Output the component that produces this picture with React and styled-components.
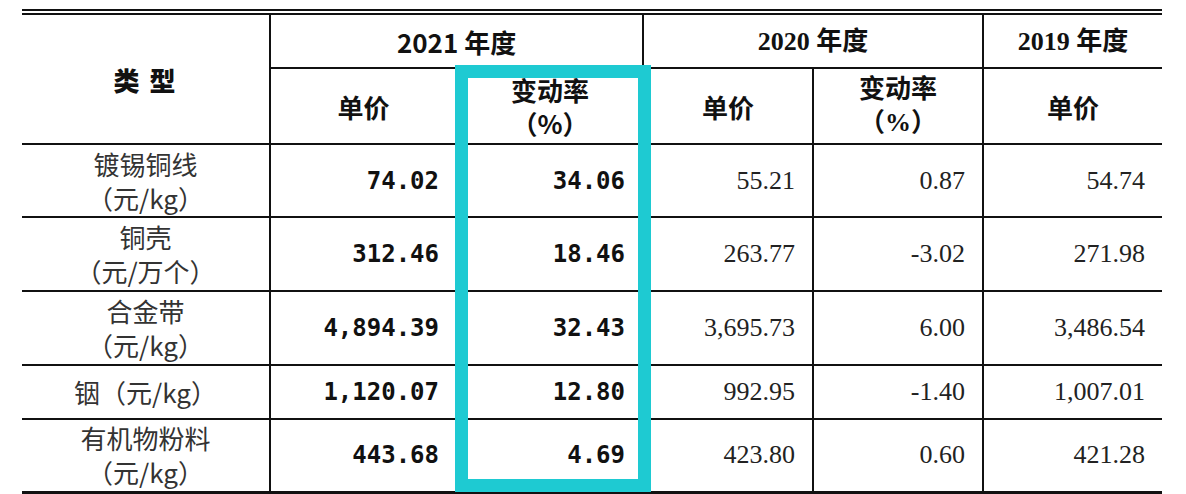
import React from "react";
import styled, { createGlobalStyle } from "styled-components";

const Global = createGlobalStyle`
  html, body { margin: 0; padding: 0; background: #ffffff; }
  body { font-family: "Noto Sans CJK SC", "Noto Sans", sans-serif; }
`;

const Page = styled.div`
  padding: 9px 0 0 22px;
  width: 1140px;
`;

const Frame = styled.div`
  position: relative;
  width: 1140px;
`;

const Table = styled.table`
  width: 1140px;
  table-layout: fixed;
  border-collapse: collapse;
  border-top: 6px double #111;
  border-bottom: 3px solid #111;
  border-left: hidden;
  border-right: hidden;
`;

const Cell = styled.td`
  border: 2px solid #111;
  padding: 0 ${(p) => (p.$align === "right" ? "17px" : "0")} 0 0;
  text-align: ${(p) => p.$align || "center"};
  vertical-align: middle;
  height: ${(p) => p.$h}px;
  box-sizing: border-box;
`;

const HeadCell = styled(Cell)`
  font-family: ${(p) =>
    p.$serif
      ? `"Liberation Serif", "Noto Sans CJK SC", serif`
      : `"Noto Sans CJK SC", sans-serif`};
  font-weight: 700;
  font-size: 26px;
  line-height: 33px;
  color: #111;
`;

const TypeLabel = styled.span`
  font-family: "Noto Sans CJK SC", sans-serif;
  font-weight: 900;
  font-size: 26px;
  letter-spacing: 2px;
`;

const NameCell = styled(Cell)`
  font-family: "Noto Sans CJK SC", sans-serif;
  font-weight: 400;
  font-size: 26px;
  line-height: 34px;
  color: #333;
`;

const BoldNum = styled(Cell)`
  font-family: "DejaVu Sans Mono", monospace;
  font-weight: 700;
  font-size: 24px;
  color: #111;
`;

const SerifNum = styled(Cell)`
  font-family: "Liberation Serif", serif;
  font-weight: 400;
  font-size: 26px;
  color: #222;
`;

const Highlight = styled.div`
  position: absolute;
  left: 433px;
  top: 56px;
  width: 196px;
  height: 427px;
  box-sizing: border-box;
  border: 13px solid #1ecad2;
  pointer-events: none;
`;

const rows = [
  { name: ["镀锡铜线", "（元/kg）"], h: 73, v: ["74.02", "34.06", "55.21", "0.87", "54.74"] },
  { name: ["铜壳", "（元/万个）"], h: 74, v: ["312.46", "18.46", "263.77", "-3.02", "271.98"] },
  { name: ["合金带", "（元/kg）"], h: 74, v: ["4,894.39", "32.43", "3,695.73", "6.00", "3,486.54"] },
  { name: ["铟（元/kg）"], h: 54, v: ["1,120.07", "12.80", "992.95", "-1.40", "1,007.01"] },
  { name: ["有机物粉料", "（元/kg）"], h: 73, v: ["443.68", "4.69", "423.80", "0.60", "421.28"] },
];

export default function App() {
  return (
    <>
      <Global />
      <Page>
        <Frame>
          <Table>
            <colgroup>
              <col style={{ width: 248 }} />
              <col style={{ width: 187 }} />
              <col style={{ width: 186 }} />
              <col style={{ width: 170 }} />
              <col style={{ width: 170 }} />
              <col style={{ width: 179 }} />
            </colgroup>
            <thead>
              <tr>
                <HeadCell rowSpan={2} $h={56}>
                  <TypeLabel>类 型</TypeLabel>
                </HeadCell>
                <HeadCell colSpan={2} $h={56}>2021 年度</HeadCell>
                <HeadCell colSpan={2} $h={56} $serif>2020 年度</HeadCell>
                <HeadCell $h={56} $serif>2019 年度</HeadCell>
              </tr>
              <tr>
                <HeadCell $h={76}>单价</HeadCell>
                <HeadCell $h={76}>
                  变动率
                  <br />
                  （%）
                </HeadCell>
                <HeadCell $h={76}>单价</HeadCell>
                <HeadCell $h={76} $serif>
                  变动率
                  <br />
                  （%）
                </HeadCell>
                <HeadCell $h={76}>单价</HeadCell>
              </tr>
            </thead>
            <tbody>
              {rows.map((r, i) => (
                <tr key={i}>
                  <NameCell $h={r.h}>
                    {r.name.map((n, j) => (
                      <React.Fragment key={j}>
                        {j > 0 && <br />}
                        {n}
                      </React.Fragment>
                    ))}
                  </NameCell>
                  <BoldNum $h={r.h} $align="right">{r.v[0]}</BoldNum>
                  <BoldNum $h={r.h} $align="right">{r.v[1]}</BoldNum>
                  <SerifNum $h={r.h} $align="right">{r.v[2]}</SerifNum>
                  <SerifNum $h={r.h} $align="right">{r.v[3]}</SerifNum>
                  <SerifNum $h={r.h} $align="right">{r.v[4]}</SerifNum>
                </tr>
              ))}
            </tbody>
          </Table>
          <Highlight />
        </Frame>
      </Page>
    </>
  );
}
